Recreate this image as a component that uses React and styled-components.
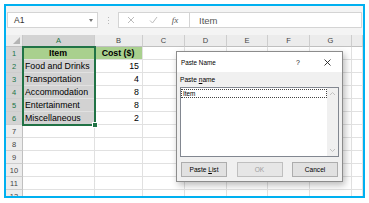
import React from 'react';
import styled, { createGlobalStyle } from 'styled-components';

const GlobalStyle = createGlobalStyle`
  html, body { margin: 0; padding: 0; background: #fff; }
  body { font-family: 'Liberation Sans', Arial, sans-serif; }
`;

const COLS = ['A', 'B', 'C', 'D', 'E', 'F', 'G', ''];
const DATA = [
    ['Item', 'Cost ($)'],
    ['Food and Drinks', '15'],
    ['Transportation', '4'],
    ['Accommodation', '8'],
    ['Entertainment', '8'],
    ['Miscellaneous', '2'],
];
const ROW_COUNT = 12;
const SELECTED_ROWS = 6;

const App = () => {
    const rows = [];
    for (let r = 1; r <= ROW_COUNT; r++) {
        const data = DATA[r - 1] || [];
        const selected = r <= SELECTED_ROWS;
        rows.push(
            <RowHead key={'h' + r} $row={r + 1} $col={1} $selected={selected}>{r}</RowHead>
        );
        COLS.forEach((c, i) => {
            let bg = '#fff';
            if (r === 1 && i < 2) bg = '#a9d08e';
            else if (selected && i === 0) bg = '#d2d2d2';
            rows.push(
                <Cell
                    key={'c' + r + '-' + i}
                    $row={r + 1}
                    $col={i + 2}
                    $bg={bg}
                    $bold={r === 1}
                    $align={r === 1 ? 'center' : i === 1 ? 'right' : 'left'}
                >
                    {data[i] || ''}
                </Cell>
            );
        });
    }

    return (
        <>
            <GlobalStyle />
            <Frame>
                <Toolbar>
                    <NameBox>
                        A1
                        <DropArrow />
                    </NameBox>
                    <Dots>
                        <i /><i /><i />
                    </Dots>
                    <FormulaBox>
                        <FormulaIcons>
                            <IconSlot>
                                <svg width="8" height="8" viewBox="0 0 8 8">
                                    <path d="M1 1 L7 7 M7 1 L1 7" stroke="#bcbcbc" strokeWidth="1" fill="none" />
                                </svg>
                            </IconSlot>
                            <IconSlot>
                                <svg width="9" height="8" viewBox="0 0 9 8">
                                    <path d="M1 4.5 L3.5 7 L8 1" stroke="#bcbcbc" strokeWidth="1" fill="none" />
                                </svg>
                            </IconSlot>
                            <IconSlot $fx>fx</IconSlot>
                        </FormulaIcons>
                        <FormulaText>Item</FormulaText>
                    </FormulaBox>
                </Toolbar>

                <Sheet>
                    <Corner $row={1} $col={1} />
                    {COLS.map((c, i) => (
                        <ColHead key={'h' + i} $row={1} $col={i + 2} $selected={i === 0}>{c}</ColHead>
                    ))}
                    {rows}
                    <Selection />
                </Sheet>

                <Dialog>
                    <TitleBar>
                        <Title>Paste Name</Title>
                        <TitleButton>?</TitleButton>
                        <TitleButton>
                            <svg width="7" height="7" viewBox="0 0 7 7">
                                <path d="M0.5 0.5 L6.5 6.5 M6.5 0.5 L0.5 6.5" stroke="#222" strokeWidth="0.9" fill="none" />
                            </svg>
                        </TitleButton>
                    </TitleBar>
                    <DialogBody>
                        <Label>Paste <u>n</u>ame</Label>
                        <ListBox>
                            <ListItems>
                                <ListItem>Item</ListItem>
                            </ListItems>
                            <ScrollBar>
                                <svg width="7" height="5" viewBox="0 0 7 5">
                                    <path d="M1 4 L3.5 1.5 L6 4" stroke="#c2c2c2" strokeWidth="1" fill="none" />
                                </svg>
                                <svg width="7" height="5" viewBox="0 0 7 5">
                                    <path d="M1 1 L3.5 3.5 L6 1" stroke="#c2c2c2" strokeWidth="1" fill="none" />
                                </svg>
                            </ScrollBar>
                        </ListBox>
                        <ButtonRow>
                            <Button>Paste <u>L</u>ist</Button>
                            <Button disabled>OK</Button>
                            <Button>Cancel</Button>
                        </ButtonRow>
                    </DialogBody>
                </Dialog>
            </Frame>
        </>
    );
};

const Frame = styled.div`
    position: relative;
    box-sizing: border-box;
    margin: 4px 0 0 4px;
    width: 361px;
    height: 194px;
    border: 2px solid #00b0f0;
    overflow: hidden;
    display: flex;
    flex-direction: column;
    background: #fff;
`;

const Toolbar = styled.div`
    flex: none;
    display: flex;
    align-items: center;
    height: 29px;
    padding: 0 0 1px 1px;
    box-sizing: border-box;
    background: #f4f4f4;
`;

const NameBox = styled.div`
    position: relative;
    box-sizing: border-box;
    width: 91px;
    height: 16px;
    background: #fff;
    border: 1px solid #d4d4d4;
    display: flex;
    align-items: center;
    padding-left: 6px;
    font-size: 8.5px;
    color: #333;
`;

const DropArrow = styled.span`
    position: absolute;
    right: 4px;
    top: 6px;
    width: 0;
    height: 0;
    border-left: 2.5px solid transparent;
    border-right: 2.5px solid transparent;
    border-top: 3px solid #777;
`;

const Dots = styled.div`
    width: 20px;
    display: flex;
    flex-direction: column;
    align-items: center;
    gap: 2px;
    i {
        display: block;
        width: 1px;
        height: 1px;
        background: #b8b8b8;
    }
`;

const FormulaBox = styled.div`
    flex: 1;
    display: flex;
    height: 16px;
    margin-right: 1px;
    box-sizing: border-box;
    border: 1px solid #d4d4d4;
    background: #fff;
`;

const FormulaIcons = styled.div`
    width: 71px;
    display: flex;
    align-items: center;
    gap: 8px;
    padding-left: 5px;
    box-sizing: border-box;
    border-right: 1px solid #d4d4d4;
`;

const IconSlot = styled.div`
    width: 14px;
    display: flex;
    align-items: center;
    justify-content: center;
    font-family: 'Liberation Serif', serif;
    font-style: italic;
    font-size: 9px;
    color: #555;
`;

const FormulaText = styled.div`
    flex: 1;
    display: flex;
    align-items: center;
    padding-left: 9px;
    font-size: 9.5px;
    color: #555;
`;

const Sheet = styled.div`
    position: relative;
    display: grid;
    grid-template-columns: 17px 72px 48px 42px 42px 41px 42px 42px 1fr;
    grid-template-rows: 12px repeat(${ROW_COUNT}, 13px);
`;

const HeadBase = styled.div`
    grid-row: ${p => p.$row};
    grid-column: ${p => p.$col};
    box-sizing: border-box;
    display: flex;
    align-items: center;
    justify-content: center;
    font-size: 7.5px;
    background: ${p => (p.$selected ? '#d3d3d3' : '#ececec')};
    color: ${p => (p.$selected ? '#217346' : '#444')};
`;

const Corner = styled(HeadBase)`
    position: relative;
    border-right: 1px solid #c8c8c8;
    border-bottom: 1px solid #c0c0c0;
    &::after {
        content: '';
        position: absolute;
        right: 2px;
        bottom: 2px;
        width: 0;
        height: 0;
        border-left: 7px solid transparent;
        border-bottom: 7px solid #b4b4b4;
    }
`;

const ColHead = styled(HeadBase)`
    border-right: 1px solid #cdcdcd;
    border-bottom: 1px solid ${p => (p.$selected ? '#217346' : '#c0c0c0')};
`;

const RowHead = styled(HeadBase)`
    border-right: 1px solid ${p => (p.$selected ? '#217346' : '#c0c0c0')};
    border-bottom: 1px solid #cdcdcd;
`;

const Cell = styled.div`
    grid-row: ${p => p.$row};
    grid-column: ${p => p.$col};
    box-sizing: border-box;
    border-right: 1px solid #e1e1e1;
    border-bottom: 1px solid #e1e1e1;
    padding: 0 3px 0 2px;
    display: flex;
    align-items: center;
    justify-content: ${p =>
        p.$align === 'right' ? 'flex-end' : p.$align === 'center' ? 'center' : 'flex-start'};
    background: ${p => p.$bg};
    font-size: 8.8px;
    font-weight: ${p => (p.$bold ? 700 : 400)};
    color: #000;
    white-space: nowrap;
    overflow: hidden;
`;

const Selection = styled.div`
    grid-column: 2 / 3;
    grid-row: 2 / 8;
    margin: -1px;
    position: relative;
    border: 2px solid #217346;
    pointer-events: none;
    z-index: 1;
    &::after {
        content: '';
        position: absolute;
        right: -4px;
        bottom: -4px;
        width: 4px;
        height: 4px;
        background: #217346;
        border: 1px solid #fff;
    }
`;

const Dialog = styled.div`
    position: absolute;
    left: 170px;
    top: 45px;
    width: 167px;
    height: 131px;
    box-sizing: border-box;
    border: 1px solid #8c8c8c;
    background: #f0f0f0;
    box-shadow: 2px 3px 7px rgba(0, 0, 0, 0.28);
    display: flex;
    flex-direction: column;
    z-index: 2;
`;

const TitleBar = styled.div`
    height: 20px;
    flex: none;
    background: #fff;
    display: flex;
    align-items: center;
    padding: 0 4px 0 4px;
`;

const Title = styled.div`
    flex: 1;
    font-size: 6.3px;
    color: #000;
`;

const TitleButton = styled.div`
    width: 22px;
    display: flex;
    align-items: center;
    justify-content: center;
    font-size: 7px;
    color: #222;
    & + & { margin-left: 7px; }
`;

const DialogBody = styled.div`
    flex: 1;
    display: flex;
    flex-direction: column;
    padding: 4px 3px 4px 3px;
`;

const Label = styled.div`
    font-size: 6.6px;
    line-height: 8px;
    color: #000;
    margin-bottom: 3px;
    u { text-decoration-thickness: 0.5px; }
`;

const ListBox = styled.div`
    height: 70px;
    box-sizing: border-box;
    border: 1px solid #828790;
    background: #fff;
    display: flex;
`;

const ListItems = styled.div`
    flex: 1;
    padding: 1px 0 0 0;
`;

const ListItem = styled.div`
    height: 7px;
    box-sizing: content-box;
    border: 1px dotted #444;
    font-size: 6.4px;
    line-height: 7px;
    padding-left: 1px;
    color: #000;
`;

const ScrollBar = styled.div`
    width: 11px;
    background: #f0f0f0;
    display: flex;
    flex-direction: column;
    justify-content: space-between;
    align-items: center;
    padding: 3px 0 3px;
`;

const ButtonRow = styled.div`
    display: flex;
    justify-content: space-between;
    margin-top: 5px;
    padding: 0 1px;
`;

const Button = styled.button`
    width: 46px;
    height: 15px;
    box-sizing: border-box;
    padding: 0;
    margin: 0;
    border: 1px solid ${p => (p.disabled ? '#bfbfbf' : '#adadad')};
    background: ${p => (p.disabled ? '#e6e6e6' : '#e1e1e1')};
    color: ${p => (p.disabled ? '#a0a0a0' : '#000')};
    font-family: 'Liberation Sans', Arial, sans-serif;
    font-size: 6.6px;
    u { text-decoration-thickness: 0.5px; }
`;

export default App;
